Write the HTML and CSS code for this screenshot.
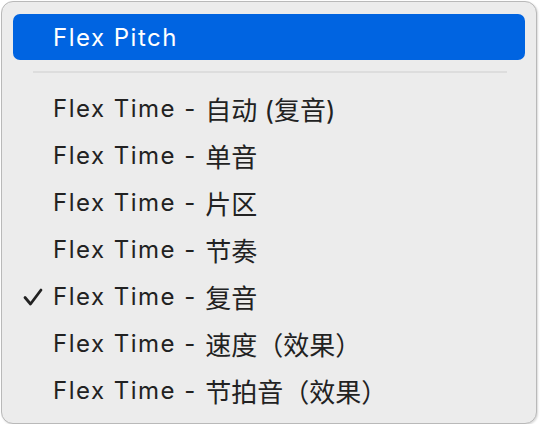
FILE: index.html
```html
<!DOCTYPE html>
<html lang="zh-CN">
<head>
    <meta charset="UTF-8">
    <title>Flex 模式菜单</title>
    <link rel="stylesheet" href="styles.css">
</head>
<body>
    <div class="menu">
        <div class="item selected"><span class="mark"></span><span class="latin">Flex Pitch</span></div>
        <div class="separator"></div>
        <div class="item"><span class="mark"></span><span class="latin">Flex Time - </span><span class="cjk">自动 (复音)</span></div>
        <div class="item"><span class="mark"></span><span class="latin">Flex Time - </span><span class="cjk">单音</span></div>
        <div class="item"><span class="mark"></span><span class="latin">Flex Time - </span><span class="cjk">片区</span></div>
        <div class="item"><span class="mark"></span><span class="latin">Flex Time - </span><span class="cjk">节奏</span></div>
        <div class="item"><span class="mark"><svg class="check" viewBox="0 0 20 18"><polyline points="2 9.5 7.5 16 18 2"></polyline></svg></span><span class="latin">Flex Time - </span><span class="cjk">复音</span></div>
        <div class="item"><span class="mark"></span><span class="latin">Flex Time - </span><span class="cjk">速度（效果）</span></div>
        <div class="item"><span class="mark"></span><span class="latin">Flex Time - </span><span class="cjk">节拍音（效果）</span></div>
    </div>
</body>
</html>
```

FILE: styles.css
```css
:root {
    --menu-bg: #ececec;
    --menu-border: #b9b9b9;
    --text-color: #222222;
    --accent: #0064e1;
    --font-main: 'Inter', 'Noto Sans CJK SC', sans-serif;
}

body {
    margin: 0;
    background: #ffffff;
    font-family: var(--font-main);
}

.menu {
    box-sizing: border-box;
    width: 536px;
    height: 423px;
    margin: 1px 0 0 1px;
    padding: 12px 11px 8px 11px;
    background-color: var(--menu-bg);
    border: 1px solid var(--menu-border);
    border-radius: 12px;
    box-shadow: 1px 1px 2px rgba(0, 0, 0, 0.15);
}

.item {
    display: flex;
    align-items: center;
    height: 47px;
    font-size: 24px;
    color: var(--text-color);
    white-space: pre;
}

.item .latin {
    letter-spacing: 1.5px;
}

.item .cjk {
    font-size: 26px;
}

.item.selected {
    height: 46px;
    background-color: var(--accent);
    border-radius: 7px;
    color: #ffffff;
}

.mark {
    display: flex;
    align-items: center;
    justify-content: center;
    width: 40px;
    flex: none;
}

.check {
    width: 20px;
    height: 18px;
    fill: none;
    stroke: var(--text-color);
    stroke-width: 2.8;
    stroke-linecap: round;
    stroke-linejoin: round;
}

.separator {
    height: 2px;
    margin: 11px 18px 12px 20px;
    background-color: #dddddd;
}
```
